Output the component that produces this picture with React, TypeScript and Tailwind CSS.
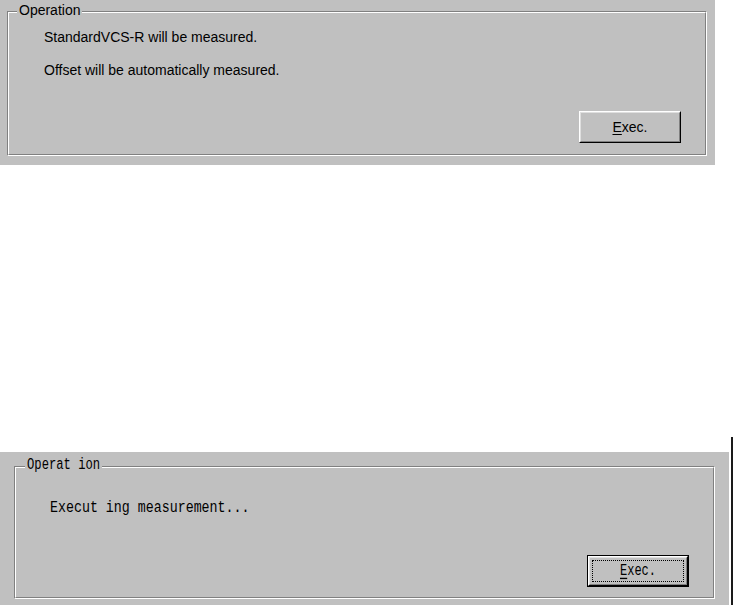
import React from 'react';

const sans = { fontFamily: '"Liberation Sans", Arial, sans-serif' };
const mono = { fontFamily: '"Liberation Mono", "Courier New", monospace' };

interface GroupBoxProps {
  title: React.ReactNode;
  className: string;
  titleClass: string;
  children: React.ReactNode;
}

// etched frame with the caption laid over the top edge
const GroupBox: React.FC<GroupBoxProps> = ({ title, className, titleClass, children }) => (
  <div className={`relative border border-t-[#808080] border-l-[#808080] border-r-white border-b-white ${className}`}>
    <div className="h-full border border-t-white border-l-white border-r-[#808080] border-b-[#808080] flex flex-col">
      {children}
    </div>
    <div className={`absolute bg-[#c0c0c0] px-[2px] text-black ${titleClass}`}>{title}</div>
  </div>
);

const App: React.FC = () => {
  return (
    <div className="w-[735px] h-[605px] bg-white overflow-hidden flex flex-col">
      {/* idle state */}
      <div className="w-[715px] h-[165px] bg-[#c0c0c0] pt-[11px] pl-[7px]" style={sans}>
        <GroupBox
          title="Operation"
          className="w-[700px] h-[145px]"
          titleClass="left-[9px] -top-[10px] text-[14px] leading-4"
        >
          <div className="flex flex-col h-full pt-[16px] pl-[35px] pr-[24px] pb-[11px] text-[14px] leading-4 text-black">
            <p>StandardVCS-R will be measured.</p>
            <p className="mt-[17px]">Offset will be automatically measured.</p>
            <button className="mt-auto self-end w-[102px] h-[32px] border border-t-white border-l-white border-r-black border-b-black bg-[#c0c0c0]">
              <div className="h-full flex items-center justify-center border border-t-[#dfdfdf] border-l-[#dfdfdf] border-r-[#808080] border-b-[#808080] text-[14px] leading-4 pb-[1px]">
                <span><span className="underline underline-offset-2">E</span>xec.</span>
              </div>
            </button>
          </div>
        </GroupBox>
      </div>

      {/* running state */}
      <div className="mt-[272px] flex flex-1">
        <div className="w-[729px] flex flex-col">
          <div className="h-[15px] bg-white" />
          <div className="flex-1 bg-[#c0c0c0] pt-[14px] pl-[14px]" style={mono}>
            <GroupBox
              title={<span className="inline-block scale-y-[1.35] origin-center">Operat ion</span>}
              className="w-[701px] h-[133px]"
              titleClass="left-[10px] -top-[10px] text-[12.2px] leading-4"
            >
              <div className="flex flex-col h-full pt-[32px] pl-[34px] pr-[24px] pb-[10px] text-black">
                <p className="text-[13.3px] leading-4">
                  <span className="inline-block scale-y-[1.3] origin-center">Execut ing measurement...</span>
                </p>
                <button className="mt-auto self-end w-[102px] h-[32px] border border-black bg-[#c0c0c0]">
                  <div className="h-full border border-t-white border-l-white border-r-black border-b-black">
                    <div className="h-full border border-t-[#dfdfdf] border-l-[#dfdfdf] border-r-[#808080] border-b-[#808080] p-[2px]">
                      <div className="h-full border border-dotted border-black flex items-center justify-center text-[12px] leading-4">
                        <span className="inline-block scale-y-[1.35] origin-center">
                          <span className="underline underline-offset-2">E</span>xec.
                        </span>
                      </div>
                    </div>
                  </div>
                </button>
              </div>
            </GroupBox>
          </div>
        </div>
        <div className="w-[2px] bg-white" />
        <div className="w-[2px] bg-[#1a1a1a]" />
      </div>
    </div>
  );
};

export default App;
